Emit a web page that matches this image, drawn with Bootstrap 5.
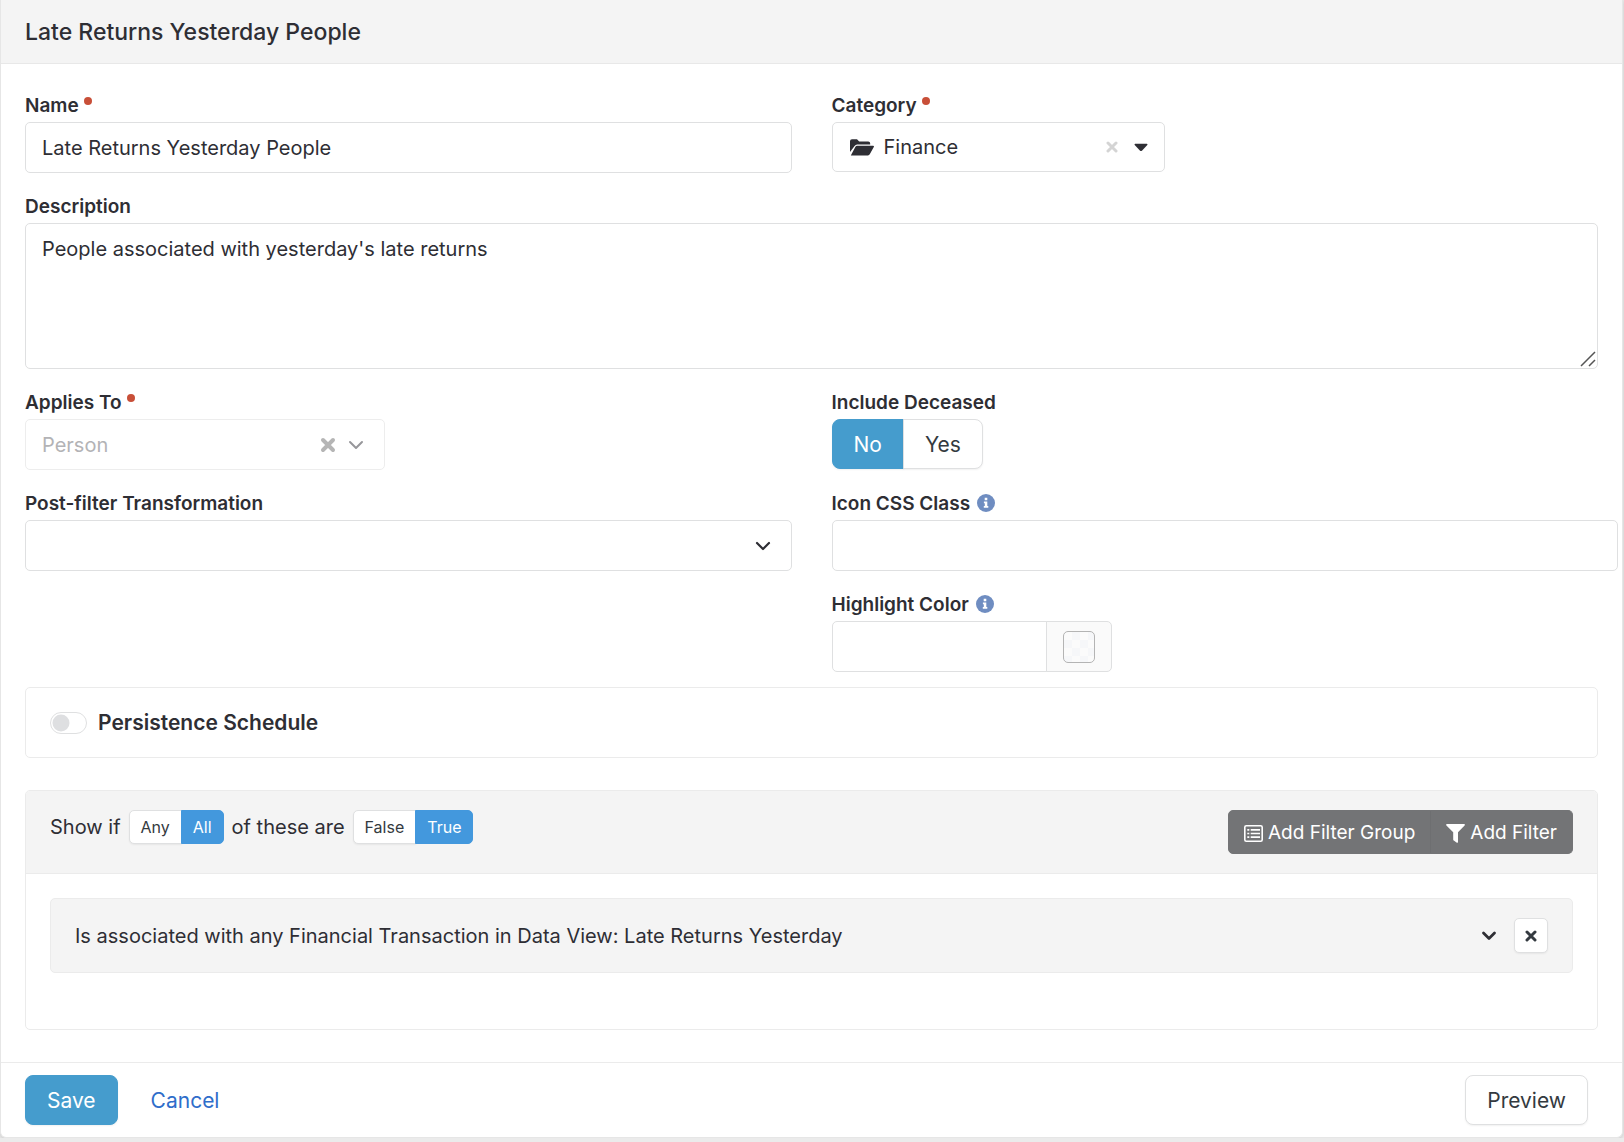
<!DOCTYPE html>
<html lang="en">
<head>
<meta charset="utf-8">
<meta name="viewport" content="width=device-width, initial-scale=1">
<title>Late Returns Yesterday People</title>
<link href="https://cdn.jsdelivr.net/npm/bootstrap@5.3.0/dist/css/bootstrap.min.css" rel="stylesheet">
<style>
:root { --ink: #2e2e34; --line: #dfe0e1; --line-soft: #ebebeb; --tint: #f4f4f4; --brand: #459ccd; --info: #4398dd; }
body { font-family: Inter, "Liberation Sans", sans-serif; font-size: 20px; line-height: 30px; color: var(--ink); background: #ebebeb; }
.panel-main { border: 1px solid #e6e6e6; border-top: 0; border-radius: 0 0 6px 6px; margin-right: 1px; box-shadow: 0 1px 4px rgba(0,0,0,.16); background: #fff; }
.panel-top { background: var(--tint); border-bottom: 1px solid #e8e8e8; padding: 17px 24px 16px; }
.panel-top h1 { font-size: 23px; font-weight: 500; line-height: 30px; }
.panel-content { padding: 28px 24px 32px; }
.row-wide { --bs-gutter-x: 40px; }
.field { margin-bottom: 20px; }
.form-label { display: block; width: fit-content; font-size: 19px; font-weight: 600; line-height: 24px; padding-top: 2px; margin-bottom: 4px; }
.req::after { content: ""; display: inline-block; width: 8px; height: 8px; border-radius: 50%; background: #c84f38; margin-left: 5px; vertical-align: 7px; }
.info-dot { margin-top: 4px; }
.form-control, .form-select { font-size: 20px; line-height: 30px; color: var(--ink); border-color: var(--line); border-radius: 5px; padding: 10px 16px 9px; height: 51px; background-color: #fff; }
textarea.form-control { height: 146px; resize: none; }
.grip { position: absolute; right: 2px; bottom: 2px; pointer-events: none; }
.form-select { background-image: url("data:image/svg+xml,%3Csvg xmlns='http://www.w3.org/2000/svg' viewBox='0 0 16 16'%3E%3Cpath fill='none' stroke='%232e2e34' stroke-width='2.2' stroke-linecap='round' stroke-linejoin='round' d='m2 5 6 6 6-6'/%3E%3C/svg%3E"); background-size: 16px 16px; background-position: right 20px center; }
.form-select:disabled { background-color: #fff; color: #b3b3b6; opacity: 1; border-color: #ededed; background-image: url("data:image/svg+xml,%3Csvg xmlns='http://www.w3.org/2000/svg' viewBox='0 0 16 16'%3E%3Cpath fill='none' stroke='%2397979b' stroke-width='2' stroke-linecap='round' stroke-linejoin='round' d='m2 5 6 6 6-6'/%3E%3C/svg%3E"); }
.select-person { width: 360px; }
.clear-person { position: absolute; right: 49px; top: 18px; }
.picker { width: 333px; height: 50px; border: 1px solid var(--line); border-radius: 5px; padding: 0 16px 0 17px; }
.plain { border: 0; padding: 0; background: none; color: inherit; line-height: 1; display: flex; align-items: center; }
.picker-main { gap: 10px; line-height: 30px; }
.btn { font-size: 21px; line-height: 30px; font-weight: 400; padding: 10px 21px 8px; border-radius: 8px; color: #343a40; }
.btn-line { background: #fff; border-color: var(--line); box-shadow: 0 1px 2px rgba(0,0,0,.06); }
.btn-brand, .btn-brand:hover { background: var(--brand); border-color: var(--brand); color: #fff; box-shadow: 0 1px 2px rgba(0,0,0,.06); }
.btn-text { color: #2f6dca; }
.btn-info-on, .btn-info-on:hover { background: var(--info); border-color: var(--info); color: #fff; }
.btn-sm { font-size: 16px; line-height: 20px; padding: 6px 11px; border-radius: 5px; }
.btn-dark-grey, .btn-dark-grey:hover { background: #737476; border-color: #737476; color: #fff; font-size: 19px; line-height: 28px; padding: 8px 15px 6px; border-radius: 5px; gap: 5px; }
.btn-dark-grey + .btn-dark-grey { border-left-color: #6e6f71; }
.wide-field { margin-right: -20px; }
.info-row { gap: 6px; }
.color-group { width: 280px; }
.color-group .input-group-text { width: 66px; background: #fafafa; border-color: var(--line); border-radius: 5px; padding: 0; }
.swatch { width: 32px; height: 32px; border: 1px solid #b4b4b4; border-radius: 5px; background: repeating-conic-gradient(#f6f7f9 0 25%, #fbfbfb 0 50%) 0 0/16px 16px; }
.box { border: 1px solid var(--line-soft); border-radius: 5px; }
.box-schedule { margin-top: 15px; margin-bottom: 32px; padding: 20px 24px 19px; }
.form-check.form-switch { min-height: 0; margin: 0; padding: 0; gap: 11px; }
.form-switch .form-check-input { width: 37px; height: 22px; margin: 0; border-color: var(--line); box-shadow: none; background-size: 22px 22px; background-image: url("data:image/svg+xml,%3Csvg xmlns='http://www.w3.org/2000/svg' viewBox='0 0 22 22'%3E%3Ccircle cx='10' cy='11' r='8.5' fill='%23dedfe1'/%3E%3C/svg%3E"); }
.form-check-label { font-size: 21px; font-weight: 600; }
.filter-top { background: var(--tint); border-bottom: 1px solid var(--line-soft); border-radius: 4px 4px 0 0; padding: 19px 24px; }
.filter-body { padding: 24px 24px 56px; }
.filter-item { background: var(--tint); padding: 20px 24px; height: 75px; gap: 17px; }
.btn-square { width: 34px; height: 35px; padding: 0; border-radius: 5px; }
.panel-foot { border-top: 1px solid var(--line-soft); padding: 12px 34px 12px 24px; gap: 11px; }
</style>
</head>
<body>
<form class="panel-main">
  <header class="panel-top"><h1 class="m-0">Late Returns Yesterday People</h1></header>
  <div class="panel-content">
    <div class="row row-wide">
      <div class="col-6 field">
        <label class="form-label req" for="name">Name</label>
        <input class="form-control" id="name" type="text" value="Late Returns Yesterday People">
      </div>
      <div class="col-6 field">
        <label class="form-label req" for="category">Category</label>
        <div class="picker d-flex align-items-center">
          <button class="plain picker-main flex-grow-1" id="category" type="button">
            <svg width="24" height="17" viewBox="0 0 24 17"><path fill="currentColor" d="M0 13V2.200A2 2 0 0 1 2 .2h5l2.200 2.300h9a2 2 0 0 1 2 2v1H7.200a3 3 0 0 0-2.600 1.500zM.8 16.400 5.300 7.900q.6-1.100 1.900-1.100h15.900q1.300 0 .7 1.100l-3.900 7.200q-.7 1.300-2 1.300z"/></svg>Finance</button>
          <button class="plain" type="button" aria-label="Clear category"><svg width="12" height="12" viewBox="0 0 12 12"><path stroke="#d4d4d4" stroke-width="3" stroke-linecap="round" d="m2 2 8 8m0-8-8 8"/></svg></button>
          <button class="plain ms-3" type="button" aria-label="Open category list"><svg width="14" height="9" viewBox="0 0 14 9"><path fill="currentColor" d="M1.200.8h11.600q1.200.2.500 1.200L7.900 7.700q-.9.8-1.800 0L.7 2Q0 1 1.200.8"/></svg></button>
        </div>
      </div>
    </div>
    <div class="field">
      <label class="form-label" for="description">Description</label>
      <div class="position-relative">
        <textarea class="form-control d-block" id="description">People associated with yesterday's late returns</textarea>
        <svg class="grip" width="16" height="16" viewBox="0 0 16 16"><path stroke="#555" stroke-width="1.500" d="M1 15 15 1M9 15l6-6"/></svg>
      </div>
    </div>
    <div class="row row-wide">
      <div class="col-6 field">
        <label class="form-label req" for="applies">Applies To</label>
        <div class="select-person position-relative">
          <select class="form-select" id="applies" disabled><option>Person</option></select>
          <svg class="clear-person" width="16" height="16" viewBox="0 0 16 16"><path stroke="#b5b5b5" stroke-width="4" stroke-linecap="round" d="m3 3 10 10m0-10L3 13"/></svg>
        </div>
      </div>
      <div class="col-6 field">
        <div class="form-label" id="deceased">Include Deceased</div>
        <div class="btn-group" role="group" aria-labelledby="deceased">
          <button class="btn btn-brand" type="button">No</button>
          <button class="btn btn-line" type="button">Yes</button>
        </div>
      </div>
      <div class="col-6">
        <label class="form-label" for="transform">Post-filter Transformation</label>
        <select class="form-select" id="transform"><option></option></select>
      </div>
      <div class="col-6">
        <div class="field wide-field">
          <div class="d-flex info-row">
            <label class="form-label" for="icon">Icon CSS Class</label>
            <svg class="info-dot" width="20" height="18" viewBox="-1 0 20 18"><circle cx="9" cy="9" r="9" fill="#6f8dc1"/><path fill="#fff" d="M7.700 3.800h2.600v2.400H7.700zM6.900 7.500h3.400v4.600h1v1.700H6.800v-1.700h1V9.200h-.9z"/></svg>
          </div>
          <input class="form-control" id="icon" type="text">
        </div>
        <div class="d-flex info-row">
          <label class="form-label" for="color">Highlight Color</label>
          <svg class="info-dot" width="20" height="18" viewBox="-1 0 20 18"><circle cx="9" cy="9" r="9" fill="#6f8dc1"/><path fill="#fff" d="M7.700 3.800h2.600v2.400H7.700zM6.900 7.500h3.400v4.600h1v1.700H6.800v-1.700h1V9.200h-.9z"/></svg>
        </div>
        <div class="input-group color-group">
          <input class="form-control" id="color" type="text">
          <button class="input-group-text justify-content-center" type="button" aria-label="Choose color"><span class="swatch"></span></button>
        </div>
      </div>
    </div>
    <section class="box box-schedule">
      <div class="form-check form-switch d-flex align-items-center">
        <input class="form-check-input" id="schedule" type="checkbox" role="switch">
        <label class="form-check-label" for="schedule">Persistence Schedule</label>
      </div>
    </section>
    <section class="box">
      <div class="filter-top d-flex align-items-start justify-content-between">
        <div class="d-flex align-items-center gap-2">
          <span>Show if</span>
          <div class="btn-group" role="group" aria-label="Match">
            <button class="btn btn-sm btn-line" type="button">Any</button>
            <button class="btn btn-sm btn-info-on" type="button">All</button>
          </div>
          <span>of these are</span>
          <div class="btn-group" role="group" aria-label="Result">
            <button class="btn btn-sm btn-line" type="button">False</button>
            <button class="btn btn-sm btn-info-on" type="button">True</button>
          </div>
        </div>
        <div class="btn-group">
          <button class="btn btn-dark-grey d-flex align-items-center" type="button"><svg width="19" height="17" viewBox="0 0 19 17" fill="none" stroke="#fff"><rect x=".8" y=".8" width="17.400" height="15.400" rx="1.500" stroke-width="1.600"/><path stroke-width="1.700" d="M6.700 4.800H16M6.700 8.500H16M6.700 12.200H16M3.300 4.800h2M3.300 8.500h2M3.300 12.200h2"/></svg>Add Filter Group</button>
          <button class="btn btn-dark-grey d-flex align-items-center" type="button"><svg width="19" height="19" viewBox="0 0 19 19"><path fill="#fff" d="M1 0h17q1.500.3.600 1.500L12 8.300V18q-.3 1.300-1.500.6l-2.700-2q-.6-.5-.6-1.200V8.300L.4 1.500Q-.4.3 1 0"/></svg>Add Filter</button>
        </div>
      </div>
      <div class="filter-body">
        <div class="box filter-item d-flex align-items-center">
          <span class="flex-grow-1">Is associated with any Financial Transaction in Data View: Late Returns Yesterday</span>
          <button class="plain" type="button" aria-label="Expand filter"><svg width="16" height="12" viewBox="0 0 16 12"><path fill="none" stroke="currentColor" stroke-width="2.800" stroke-linecap="round" stroke-linejoin="round" d="m2.500 3 5.500 5.500L13.500 3"/></svg></button>
          <button class="btn btn-line btn-square d-flex align-items-center justify-content-center" type="button" aria-label="Remove filter"><svg width="12" height="12" viewBox="0 0 12 12"><path stroke="currentColor" stroke-width="3" stroke-linecap="round" d="m2 2 8 8m0-8-8 8"/></svg></button>
        </div>
      </div>
    </section>
  </div>
  <footer class="panel-foot d-flex align-items-center">
    <button class="btn btn-brand" type="submit">Save</button>
    <a class="btn btn-text" href="#">Cancel</a>
    <button class="btn btn-line ms-auto" type="button">Preview</button>
  </footer>
</form>
<script src="https://cdn.jsdelivr.net/npm/bootstrap@5.3.0/dist/js/bootstrap.bundle.min.js"></script>
</body>
</html>
